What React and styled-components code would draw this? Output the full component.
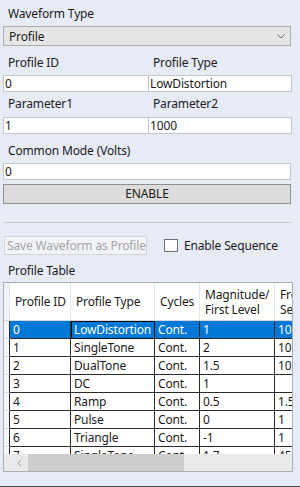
import React from 'react';
import styled, { createGlobalStyle } from 'styled-components';

const Global = createGlobalStyle`
  html, body { margin: 0; padding: 0; }
  body { background: #e7ebf6; }
  * { box-sizing: border-box; }
`;

const Page = styled.div`
  width: 300px;
  height: 487px;
  background: #e7ebf6;
  border-bottom: 1px solid #3a5450;
  padding: 0 9px 0 3px;
  display: flex;
  flex-direction: column;
  font-family: "Noto Sans", "Open Sans", sans-serif;
  font-size: 12px;
  letter-spacing: -0.15px;
  color: #1b1b1b;
  overflow: hidden;
`;

const Label = styled.div`
  height: 16px;
  line-height: 16px;
  padding-left: ${p => p.$indent || 5}px;
  margin-top: ${p => p.$top || 0}px;
  white-space: nowrap;
`;

const Pair = styled.div`
  display: grid;
  grid-template-columns: 146px 143px;
  margin-top: ${p => p.$top || 0}px;
  > :nth-child(2) { margin-left: -1px; }
`;

const Select = styled.div`
  margin-top: 4px;
  height: 20px;
  background: #e5e5e5;
  border: 1px solid #acacac;
  display: flex;
  align-items: center;
  justify-content: space-between;
  padding: 0 5px 0 5px;
`;

const Field = styled.div`
  height: 17px;
  line-height: 15px;
  background: #fff;
  border: 1px solid #c3c6cc;
  padding-left: 1px;
  margin-top: ${p => p.$top || 0}px;
  white-space: nowrap;
  overflow: hidden;
`;

const Button = styled.div`
  margin-top: 4px;
  height: 20px;
  line-height: 18px;
  text-align: center;
  background: #dddddd;
  border: 1px solid #8f8f8f;
`;

const Separator = styled.div`
  margin-top: 18px;
  height: 1px;
  background: #c9ccd3;
`;

const ActionRow = styled.div`
  margin-top: 13px;
  display: flex;
  align-items: center;
`;

const DisabledButton = styled.div`
  margin-left: 1px;
  width: 143px;
  height: 19px;
  line-height: 17px;
  border: 1px solid #cfd2d6;
  background: #f2f3f6;
  color: #a2a4a8;
  padding-left: 2px;
  white-space: nowrap;
  overflow: hidden;
`;

const Check = styled.label`
  margin-left: 17px;
  display: flex;
  align-items: center;
  gap: 6px;
  white-space: nowrap;
`;

const Box = styled.span`
  width: 14px;
  height: 13px;
  background: #fff;
  border: 1px solid #6f6f6f;
`;

const Grid = styled.div`
  margin-top: 3px;
  width: 290px;
  height: 190px;
  border: 1px solid #a9adb5;
  background: #fff;
  display: flex;
  flex-direction: column;
  overflow: hidden;
`;

const cols = '6px 61px 84px 45px 75px 60px';

const HeadRow = styled.div`
  display: grid;
  grid-template-columns: ${cols};
  height: 38px;
  flex: none;
  background: #fff;
  border-bottom: 1px solid #d4d6da;
`;

const HeadCell = styled.div`
  display: flex;
  align-items: center;
  line-height: 15px;
  white-space: nowrap;
  overflow: hidden;
  border-right: 1px solid #e2e4e8;
  background: ${p => (p.$corner ? '#f3f4f7' : '#fff')};
  padding-left: ${p => (p.$corner ? 0 : 5)}px;
`;

const Body = styled.div`
  flex: 1;
  overflow: hidden;
`;

const Row = styled.div`
  display: grid;
  grid-template-columns: ${cols};
  height: 18px;
`;

const Cell = styled.div`
  line-height: 17px;
  padding-left: 3px;
  white-space: nowrap;
  overflow: hidden;
  border-bottom: 1px solid #2b2b2b;
  border-right: 1px solid #2b2b2b;
  background: ${p => (p.$sel ? '#0078d7' : '#fff')};
  color: ${p => (p.$sel ? '#fff' : '#1b1b1b')};
  outline: ${p => (p.$focus ? '1px solid #111' : 'none')};
  outline-offset: -1px;
`;

const RowHead = styled.div`
  background: #f5f6f9;
  border-bottom: 1px solid #d8dade;
  border-right: 1px solid #2b2b2b;
`;

const HScroll = styled.div`
  height: 17px;
  flex: none;
  background: #e9e9e9;
  display: flex;
  align-items: center;
`;

const Arrow = styled.div`
  width: 24px;
  display: flex;
  justify-content: center;
  padding-left: 6px;
`;

const Thumb = styled.div`
  width: 156px;
  height: 17px;
  background: #cdcdcd;
`;

const rows = [
  ['0', 'LowDistortion', 'Cont.', '1', '10'],
  ['1', 'SingleTone', 'Cont.', '2', '10'],
  ['2', 'DualTone', 'Cont.', '1.5', '10'],
  ['3', 'DC', 'Cont.', '1', ''],
  ['4', 'Ramp', 'Cont.', '0.5', '1.5'],
  ['5', 'Pulse', 'Cont.', '0', '1'],
  ['6', 'Triangle', 'Cont.', '-1', '1'],
  ['7', 'SingleTone', 'Cont.', '1.7', '45'],
];

const Chevron = () => (
  <svg width="8" height="5" viewBox="0 0 8 5">
    <polyline points="0.5,0.5 4,4 7.5,0.5" fill="none" stroke="#6a6a6a" strokeWidth="1" />
  </svg>
);

const LeftArrow = () => (
  <svg width="5" height="8" viewBox="0 0 5 8">
    <polyline points="4.5,0.5 1,4 4.5,7.5" fill="none" stroke="#a0a0a0" strokeWidth="1" />
  </svg>
);

export default function App() {
  return (
    <Page>
      <Global />
      <Label $top={6}>Waveform Type</Label>
      <Select>
        <span>Profile</span>
        <Chevron />
      </Select>

      <Pair $top={9}>
        <Label>Profile ID</Label>
        <Label $indent={5}>Profile Type</Label>
      </Pair>
      <Pair $top={4}>
        <Field>0</Field>
        <Field>LowDistortion</Field>
      </Pair>

      <Pair $top={4}>
        <Label>Parameter1</Label>
        <Label $indent={5}>Parameter2</Label>
      </Pair>
      <Pair $top={5}>
        <Field>1</Field>
        <Field>1000</Field>
      </Pair>

      <Label $top={9}>Common Mode (Volts)</Label>
      <Field $top={4}>0</Field>
      <Button>ENABLE</Button>

      <Separator />

      <ActionRow>
        <DisabledButton>Save Waveform as Profile</DisabledButton>
        <Check>
          <Box />
          Enable Sequence
        </Check>
      </ActionRow>

      <Label $top={8}>Profile Table</Label>
      <Grid>
        <HeadRow>
          <HeadCell $corner />
          <HeadCell>Profile ID</HeadCell>
          <HeadCell>Profile Type</HeadCell>
          <HeadCell>Cycles</HeadCell>
          <HeadCell>Magnitude/<br />First Level</HeadCell>
          <HeadCell>Freq/<br />Sec</HeadCell>
        </HeadRow>
        <Body>
          {rows.map((r, i) => (
            <Row key={i}>
              <RowHead />
              {r.map((v, j) => (
                <Cell key={j} $sel={i === 0} $focus={i === 0 && j === 1}>{v}</Cell>
              ))}
            </Row>
          ))}
        </Body>
        <HScroll>
          <Arrow><LeftArrow /></Arrow>
          <Thumb />
        </HScroll>
      </Grid>
    </Page>
  );
}
